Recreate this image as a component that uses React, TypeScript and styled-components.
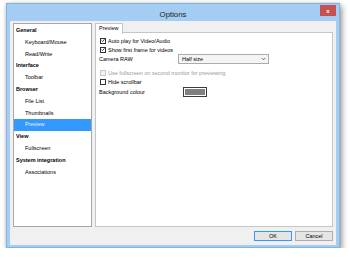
import styled, { createGlobalStyle } from 'styled-components';

const GlobalStyle = createGlobalStyle`
  html, body {
    margin: 0;
    padding: 0;
    background: #ffffff;
  }
  body {
    font-family: 'Liberation Sans', Arial, sans-serif;
    font-size: 5.5px;
    color: #000;
  }
`;

const Window = styled.div`
  box-sizing: border-box;
  width: 334px;
  height: 245px;
  margin: 3px 0 0 6px;
  background: #a3cdf2;
  border: 1px solid #86b3dc;
  box-shadow: 2px 3px 6px rgba(0, 0, 0, 0.4), 0 0 3px rgba(0, 0, 0, 0.15);
  display: flex;
  flex-direction: column;
  padding: 0 3px 2px;
`;

const TitleBar = styled.div`
  height: 17px;
  flex: 0 0 auto;
  position: relative;
  display: flex;
  align-items: center;
  justify-content: center;
`;

const Title = styled.span`
  font-size: 7.8px;
  color: #222;
  margin-top: 3px;
`;

const CloseButton = styled.div`
  position: absolute;
  right: 0;
  top: 1px;
  width: 16px;
  height: 11px;
  background: #c75050;
  color: #fff;
  font-size: 6px;
  font-weight: bold;
  display: flex;
  align-items: center;
  justify-content: center;
`;

const Client = styled.div`
  flex: 1 1 auto;
  background: #f0f0f0;
  display: flex;
  flex-direction: column;
  padding: 2px 3px 4px;
  min-height: 0;
`;

const Main = styled.div`
  height: 204px;
  display: flex;
  gap: 3px;
`;

const Tree = styled.div`
  box-sizing: border-box;
  width: 79px;
  background: #fff;
  border: 1px solid #a8a8a8;
  padding-top: 1px;
`;

const TreeItem = styled.div<{ $group?: boolean; $selected?: boolean }>`
  height: 11.8px;
  line-height: 11.8px;
  padding-left: ${(p) => (p.$group ? '2px' : '11px')};
  font-weight: ${(p) => (p.$group ? 'bold' : 'normal')};
  background: ${(p) => (p.$selected ? '#3399ff' : 'transparent')};
  color: ${(p) => (p.$selected ? '#e8f3ff' : '#000')};
  white-space: nowrap;
`;

const TabArea = styled.div`
  flex: 1 1 auto;
  display: flex;
  flex-direction: column;
`;

const TabStrip = styled.div`
  display: flex;
  height: 10px;
  margin-bottom: -1px;
  position: relative;
  z-index: 1;
`;

const Tab = styled.div`
  box-sizing: border-box;
  width: 28px;
  height: 11px;
  background: #fff;
  border: 1px solid #c6c6c6;
  border-bottom: none;
  padding-left: 3px;
  line-height: 9px;
`;

const Panel = styled.div`
  flex: 1 1 auto;
  box-sizing: border-box;
  background: #fff;
  border: 1px solid #c6c6c6;
  padding: 3px 3px 0 3px;
  display: flex;
  flex-direction: column;
`;

const Row = styled.div<{ $h?: number; $disabled?: boolean }>`
  display: flex;
  align-items: center;
  height: ${(p) => p.$h ?? 9}px;
  color: ${(p) => (p.$disabled ? '#9a9a9a' : '#000')};
`;

const Box = styled.span<{ $disabled?: boolean }>`
  box-sizing: border-box;
  width: 6px;
  height: 6px;
  margin: 0 2px 0 1px;
  border: 1px solid ${(p) => (p.$disabled ? '#c8c8c8' : '#333')};
  background: ${(p) => (p.$disabled ? '#f2f2f2' : '#fff')};
  display: flex;
  align-items: center;
  justify-content: center;
`;

const Label = styled.span`
  width: 79px;
`;

const Select = styled.div`
  box-sizing: border-box;
  width: 91px;
  height: 10px;
  border: 1px solid #acacac;
  background: #f4f4f4;
  display: flex;
  align-items: center;
  justify-content: space-between;
  padding: 0 2px 0 3px;
`;

const ColourButton = styled.div`
  box-sizing: border-box;
  width: 24px;
  height: 10px;
  margin-left: 5px;
  border: 1px solid #3c3c3c;
  padding: 1px;
  background: #fff;
`;

const Swatch = styled.div`
  width: 100%;
  height: 100%;
  background: #808080;
`;

const Footer = styled.div`
  display: flex;
  justify-content: flex-end;
  gap: 3px;
  margin-top: 4px;
`;

const Button = styled.div<{ $default?: boolean }>`
  box-sizing: border-box;
  width: 38px;
  height: 10px;
  background: #e5e5e5;
  border: 1px solid ${(p) => (p.$default ? '#3399ff' : '#adadad')};
  display: flex;
  align-items: center;
  justify-content: center;
`;

const Check = ({ on, disabled }: { on?: boolean; disabled?: boolean }) => (
  <Box $disabled={disabled}>
    {on && (
      <svg width='5' height='5' viewBox='0 0 10 10'>
        <path d='M1.5 5.2 L4 7.8 L8.8 1.8' fill='none' stroke='#222' strokeWidth='2' />
      </svg>
    )}
  </Box>
);

const tree: { text: string; group?: boolean; selected?: boolean }[] = [
  { text: 'General', group: true },
  { text: 'Keyboard/Mouse' },
  { text: 'Read/Write' },
  { text: 'Interface', group: true },
  { text: 'Toolbar' },
  { text: 'Browser', group: true },
  { text: 'File List' },
  { text: 'Thumbnails' },
  { text: 'Preview', selected: true },
  { text: 'View', group: true },
  { text: 'Fullscreen' },
  { text: 'System integration', group: true },
  { text: 'Associations' },
];

const App = () => (
  <>
    <GlobalStyle />
    <Window>
      <TitleBar>
        <Title>Options</Title>
        <CloseButton>x</CloseButton>
      </TitleBar>
      <Client>
        <Main>
          <Tree>
            {tree.map((t) => (
              <TreeItem key={t.text} $group={t.group} $selected={t.selected}>
                {t.text}
              </TreeItem>
            ))}
          </Tree>
          <TabArea>
            <TabStrip>
              <Tab>Preview</Tab>
            </TabStrip>
            <Panel>
              <Row>
                <Check on />
                Auto play for Video/Audio
              </Row>
              <Row>
                <Check on />
                Show first frame for videos
              </Row>
              <Row $h={10}>
                <Label>Camera RAW</Label>
                <Select>
                  <span>Half size</span>
                  <svg width='5' height='4' viewBox='0 0 10 8'>
                    <path d='M1.5 2 L5 5.5 L8.5 2' fill='none' stroke='#444' strokeWidth='1.6' />
                  </svg>
                </Select>
              </Row>
              <Row $h={4} />
              <Row $disabled>
                <Check disabled />
                Use fullscreen on second monitor for previewing
              </Row>
              <Row>
                <Check />
                Hide scrollbar
              </Row>
              <Row $h={11}>
                <Label>Background colour</Label>
                <ColourButton>
                  <Swatch />
                </ColourButton>
              </Row>
            </Panel>
          </TabArea>
        </Main>
        <Footer>
          <Button $default>OK</Button>
          <Button>Cancel</Button>
        </Footer>
      </Client>
    </Window>
  </>
);

export default App;
